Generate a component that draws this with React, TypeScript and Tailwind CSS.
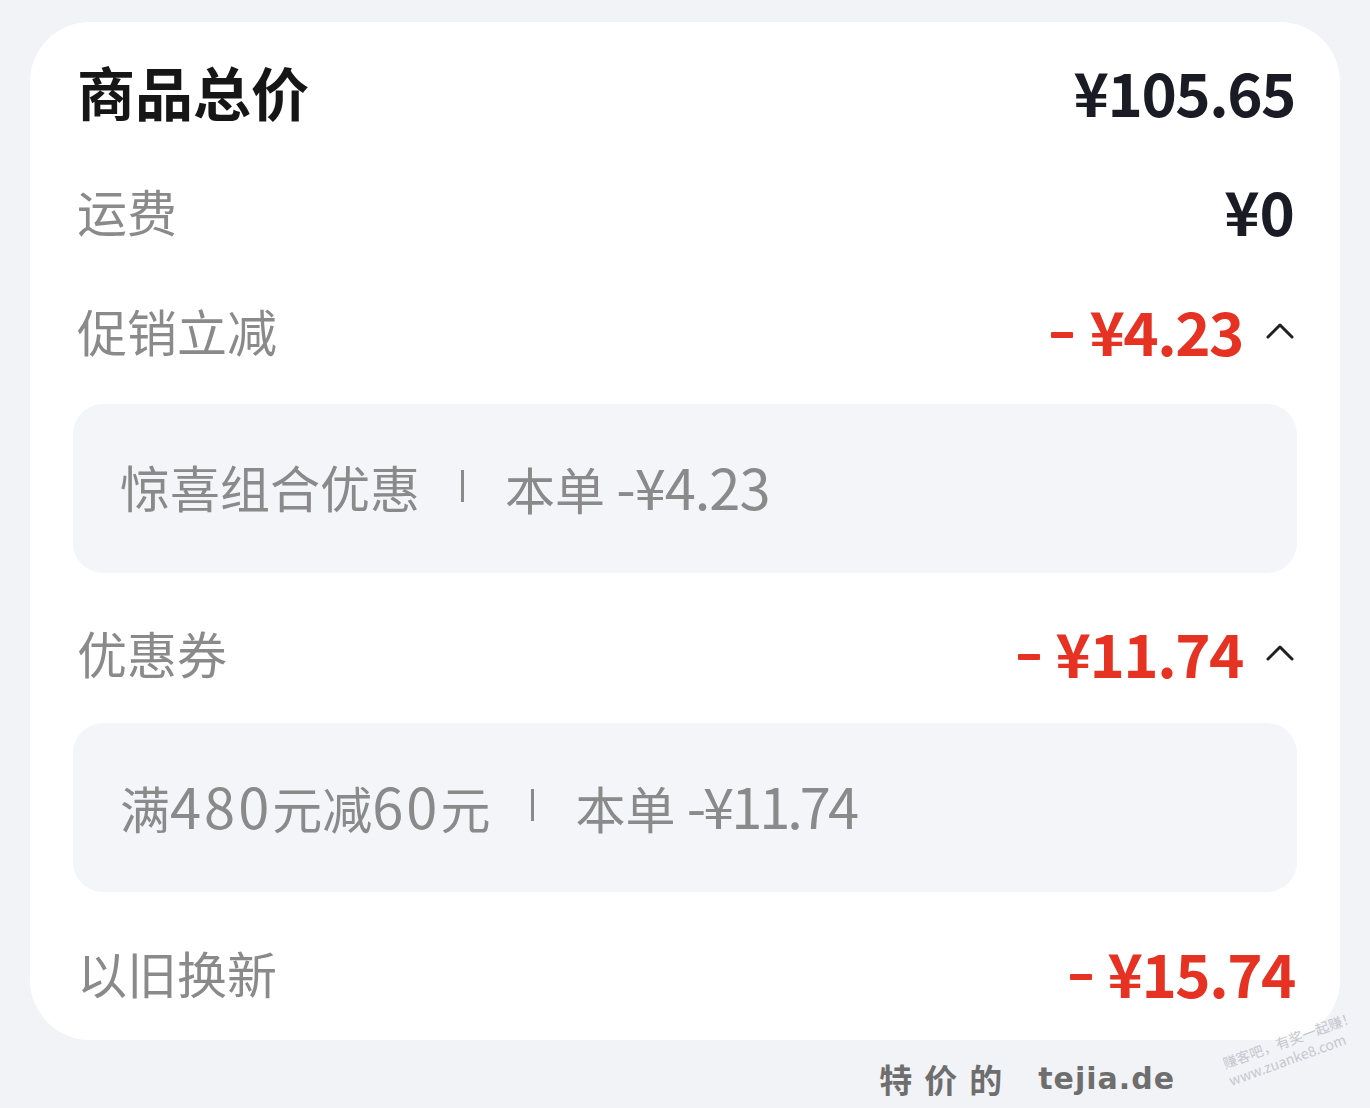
import React from 'react';

const cjk = { fontFamily: '"Noto Sans CJK SC", "Noto Sans", sans-serif' };

const Chevron = () => (
  <svg width="30" height="18" viewBox="0 0 30 18" className="ml-[22px]">
    <path d="M3 16 L15 4 L27 16" fill="none" stroke="#1f1f24" strokeWidth="3" strokeLinecap="round" strokeLinejoin="round" />
  </svg>
);

const Row = ({ label, children, className = '' }: { label: string; children: React.ReactNode; className?: string }) => (
  <div className={`flex items-center justify-between h-[120px] pb-[6px] pl-[4px] pr-[2px] ${className}`}>
    <span className="text-[50px] text-[#8a8a8a] leading-none">{label}</span>
    <div className="flex items-center">{children}</div>
  </div>
);

const Minus = ({ value }: { value: string }) => (
  <span className="flex items-center text-[#e53222] font-bold text-[60px] leading-none tracking-[-1.5px]">
    <span className="w-[22px] h-[6px] bg-[#e53222] mt-[10px] mr-[16px] rounded-[1px]" />
    <span>{value}</span>
  </span>
);

// digits in the grey boxes run a touch larger than the hanzi
const Num = ({ children }: { children: React.ReactNode }) => (
  <span className="text-[56px] tracking-[3px]">{children}</span>
);

const Detail = ({
  title,
  amount,
  amountClass = 'tracking-[-1px]',
  className = '',
}: {
  title: React.ReactNode;
  amount: string;
  amountClass?: string;
  className?: string;
}) => (
  <div className={`h-[169px] rounded-[30px] bg-[#f4f5f9] flex items-center pb-[6px] pl-[47px] text-[50px] text-[#8a8a8a] leading-none ${className}`}>
    <span>{title}</span>
    <span className="w-[3px] h-[32px] bg-[#8a8a8a] mx-[41px]" />
    <span>
      本单 <span className={`text-[56px] ${amountClass}`}>-{amount}</span>
    </span>
  </div>
);

export default function App() {
  return (
    <div className="relative w-[1370px] h-[1108px] bg-[#f2f3f7] pt-[22px] overflow-hidden" style={cjk}>
      <div className="mx-[30px] bg-white rounded-[60px] px-[43px] pt-[14px] pb-[5px]">
        <div className="flex items-center justify-between h-[118px] pb-[8px] pl-[4px] pr-[2px]">
          <span className="text-[58px] font-bold text-[#161616] leading-none">商品总价</span>
          <span className="text-[60px] font-bold text-[#1a1b24] leading-none tracking-[-1.5px]">¥105.65</span>
        </div>
        <div className="flex items-center justify-between h-[118px] pb-[6px] pl-[4px] pr-[2px]">
          <span className="text-[50px] text-[#8a8a8a] leading-none">运费</span>
          <span className="text-[60px] font-bold text-[#1a1b24] leading-none">¥0</span>
        </div>
        <Row label="促销立减" className="mt-[1px]">
          <Minus value="¥4.23" />
          <Chevron />
        </Row>
        <Detail title="惊喜组合优惠" amount="¥4.23" className="mt-[11px]" />
        <Row label="优惠券" className="mt-[22px]">
          <Minus value="¥11.74" />
          <Chevron />
        </Row>
        <Detail
          title={<>满<Num>480</Num>元减<Num>60</Num>元</>}
          amount="¥11.74"
          amountClass="tracking-[-3px]"
          className="mt-[8px]"
        />
        <Row label="以旧换新" className="mt-[23px]">
          <Minus value="¥15.74" />
        </Row>
      </div>

      <div className="flex items-center justify-end h-[80px] pr-[195px] pb-[2px] font-bold text-[#6e6e6e] leading-none">
        <span className="text-[33px] tracking-[12px]">特价的</span>
        <span className="ml-[24px] text-[30px] tracking-[1px]" style={{ fontFamily: '"DejaVu Sans", sans-serif' }}>tejia.de</span>
      </div>

      <div className="absolute left-[1222px] top-[1030px] -rotate-[20deg] text-[14px] text-[#c6c7cd] leading-[18px] whitespace-pre-line">
        {'赚客吧，有奖一起赚！\nwww.zuanke8.com'}
      </div>
    </div>
  );
}
